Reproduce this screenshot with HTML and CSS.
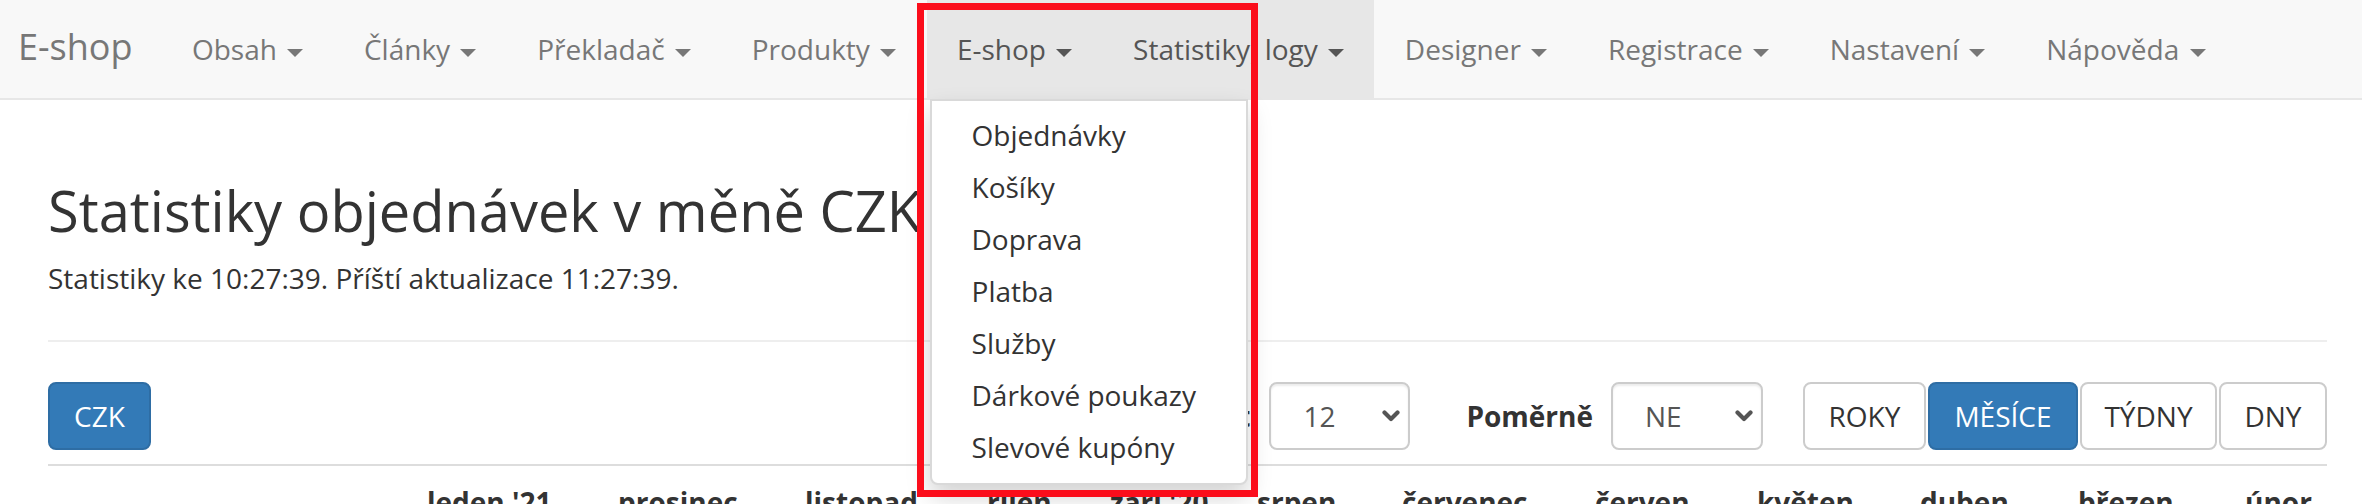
FILE: index.html
```html
<!DOCTYPE html>
<html lang="cs">
<head>
<meta charset="utf-8">
<title>Statistiky objednávek</title>
<link rel="stylesheet" href="styles.css">
</head>
<body>
<nav class="navbar">
  <a class="brand" href="#">E-shop</a>
  <ul class="nav">
    <li class="nav-item"><a class="nav-link" href="#">Obsah <span class="caret"></span></a></li>
    <li class="nav-item"><a class="nav-link" href="#">Články <span class="caret"></span></a></li>
    <li class="nav-item"><a class="nav-link" href="#">Překladač <span class="caret"></span></a></li>
    <li class="nav-item"><a class="nav-link" href="#">Produkty <span class="caret"></span></a></li>
    <li class="nav-item open"><a class="nav-link" href="#">E-shop <span class="caret"></span></a>
      <ul class="dropdown">
        <li><a href="#">Objednávky</a></li>
        <li><a href="#">Košíky</a></li>
        <li><a href="#">Doprava</a></li>
        <li><a href="#">Platba</a></li>
        <li><a href="#">Služby</a></li>
        <li><a href="#">Dárkové poukazy</a></li>
        <li><a href="#">Slevové kupóny</a></li>
      </ul>
    </li>
    <li class="nav-item open"><a class="nav-link" href="#">Statistiky, logy <span class="caret"></span></a></li>
    <li class="nav-item"><a class="nav-link" href="#">Designer <span class="caret"></span></a></li>
    <li class="nav-item"><a class="nav-link" href="#">Registrace <span class="caret"></span></a></li>
    <li class="nav-item"><a class="nav-link" href="#">Nastavení <span class="caret"></span></a></li>
    <li class="nav-item"><a class="nav-link" href="#">Nápověda <span class="caret"></span></a></li>
  </ul>
</nav>

<main class="page">
  <h1 class="title">Statistiky objednávek v měně CZK</h1>
  <p class="updated">Statistiky ke 10:27:39. Příští aktualizace 11:27:39.</p>
  <hr class="rule">
  <div class="toolbar">
    <button class="btn btn-primary">CZK</button>
    <div class="filters">
      <span class="label">Počet</span>
      <div class="select select-count"><span>12</span>
        <svg class="chev" width="18" height="12" viewBox="0 0 18 12"><path d="M2.5 2.5 L9 9 L15.5 2.5" fill="none" stroke="#555" stroke-width="4.2" stroke-linecap="round" stroke-linejoin="round"/></svg>
      </div>
      <span class="label label-ratio">Poměrně</span>
      <div class="select select-ratio"><span>NE</span>
        <svg class="chev" width="18" height="12" viewBox="0 0 18 12"><path d="M2.5 2.5 L9 9 L15.5 2.5" fill="none" stroke="#555" stroke-width="4.2" stroke-linecap="round" stroke-linejoin="round"/></svg>
      </div>
      <div class="btn-group">
        <button class="btn btn-years">ROKY</button>
        <button class="btn btn-primary btn-months">MĚSÍCE</button>
        <button class="btn btn-weeks">TÝDNY</button>
        <button class="btn btn-days">DNY</button>
      </div>
    </div>
  </div>
  <hr class="rule rule-table">
  <div class="thead">
    <span></span>
    <span>leden '21</span>
    <span>prosinec</span>
    <span>listopad</span>
    <span>říjen</span>
    <span>září '20</span>
    <span>srpen</span>
    <span>červenec</span>
    <span>červen</span>
    <span>květen</span>
    <span>duben</span>
    <span>březen</span>
    <span>únor</span>
  </div>
</main>

<div class="annotation"></div>
</body>
</html>
```

FILE: styles.css
```css
html, body {
  margin: 0;
  padding: 0;
}

body {
  font-family: "Open Sans", "Liberation Sans", sans-serif;
  font-size: 28px;
  color: #333;
  background: #fff;
  overflow: hidden;
  height: 504px;
  position: relative;
}

a {
  text-decoration: none;
}

/* ---------- navbar ---------- */
.navbar {
  display: flex;
  height: 98px;
  background: #f8f8f8;
  border-bottom: 2px solid #e7e7e7;
}

.brand {
  padding: 27px 29px 0 18px;
  font-size: 36px;
  line-height: 40px;
  color: #777;
}

.nav {
  display: flex;
  list-style: none;
  margin: 0;
  padding: 0;
}

.nav-item {
  position: relative;
}

.nav-link {
  display: block;
  padding: 29px 30.4px;
  line-height: 40px;
  color: #777;
  white-space: nowrap;
}

.nav-item.open .nav-link {
  background: #e7e7e7;
  color: #555;
}

.caret {
  display: inline-block;
  width: 0;
  height: 0;
  margin-left: 3px;
  vertical-align: middle;
  border-top: 8px solid;
  border-left: 8px solid transparent;
  border-right: 8px solid transparent;
}

/* ---------- dropdown ---------- */
.dropdown {
  position: absolute;
  top: 100%;
  left: 3px;
  z-index: 10;
  min-width: 318px;
  box-sizing: border-box;
  margin: 1px 0 0;
  padding: 8px 0 10px;
  list-style: none;
  background: #fff;
  border: 2px solid rgba(0, 0, 0, 0.15);
  border-radius: 0 0 8px 8px;
  box-shadow: 0 12px 24px rgba(0, 0, 0, 0.175);
}

.dropdown a {
  display: block;
  padding: 6px 40px;
  line-height: 40px;
  color: #333;
  white-space: nowrap;
}

/* ---------- page ---------- */
.page {
  padding: 0 35px 0 48px;
}

.title {
  margin: 79px 0 0;
  font-size: 56px;
  line-height: 62px;
  font-weight: 400;
  white-space: nowrap;
}

.updated {
  margin: 17px 0 0;
  font-size: 28px;
  line-height: 40px;
}

.rule {
  margin: 42px 0 0;
  height: 0;
  border: 0;
  border-top: 2px solid #eee;
}

.rule-table {
  margin-top: 14px;
  border-top-color: #ddd;
}

.toolbar {
  margin-top: 40px;
  display: flex;
  justify-content: space-between;
  align-items: center;
}

.filters {
  display: flex;
  align-items: center;
}

.btn {
  height: 68px;
  box-sizing: border-box;
  padding: 0 24px;
  border: 2px solid #ccc;
  border-radius: 8px;
  background: #fff;
  font-family: inherit;
  font-size: 28px;
  line-height: 64px;
  color: #333;
  text-align: center;
}

.btn-primary {
  background: #337ab7;
  border-color: #2e6da4;
  color: #fff;
}

.label {
  font-weight: 700;
  margin-right: 19px;
}

.label-ratio {
  margin-left: 56px;
  margin-right: 18px;
}

.select {
  display: flex;
  align-items: center;
  justify-content: space-between;
  height: 68px;
  box-sizing: border-box;
  padding: 0 8px 0 32px;
  border: 2px solid #ccc;
  border-radius: 8px;
  background: #fff;
  color: #555;
  box-shadow: inset 0 2px 2px rgba(0, 0, 0, 0.075);
}

.select-count {
  width: 141px;
}

.select-ratio {
  width: 152px;
}

.btn-group {
  display: flex;
  gap: 2px;
  margin-left: 40px;
}

.btn-group .btn {
  padding: 0;
}

.btn-years {
  width: 123px;
}

.btn-months {
  width: 150px;
}

.btn-weeks {
  width: 137px;
}

.btn-days {
  width: 108px;
}

/* ---------- table header ---------- */
.thead {
  display: grid;
  grid-template-columns: 363px 191px 187px 182px 123px 147px 145px 193px 162px 163px 158px 167px 98px;
  padding-top: 16px;
  font-weight: 700;
  line-height: 40px;
  white-space: nowrap;
}

.thead span {
  padding-left: 16px;
}

/* ---------- screenshot annotation ---------- */
.annotation {
  position: absolute;
  left: 917px;
  top: 3px;
  width: 341px;
  height: 494px;
  box-sizing: border-box;
  border: 7px solid #fb0d1b;
  z-index: 20;
}
```
